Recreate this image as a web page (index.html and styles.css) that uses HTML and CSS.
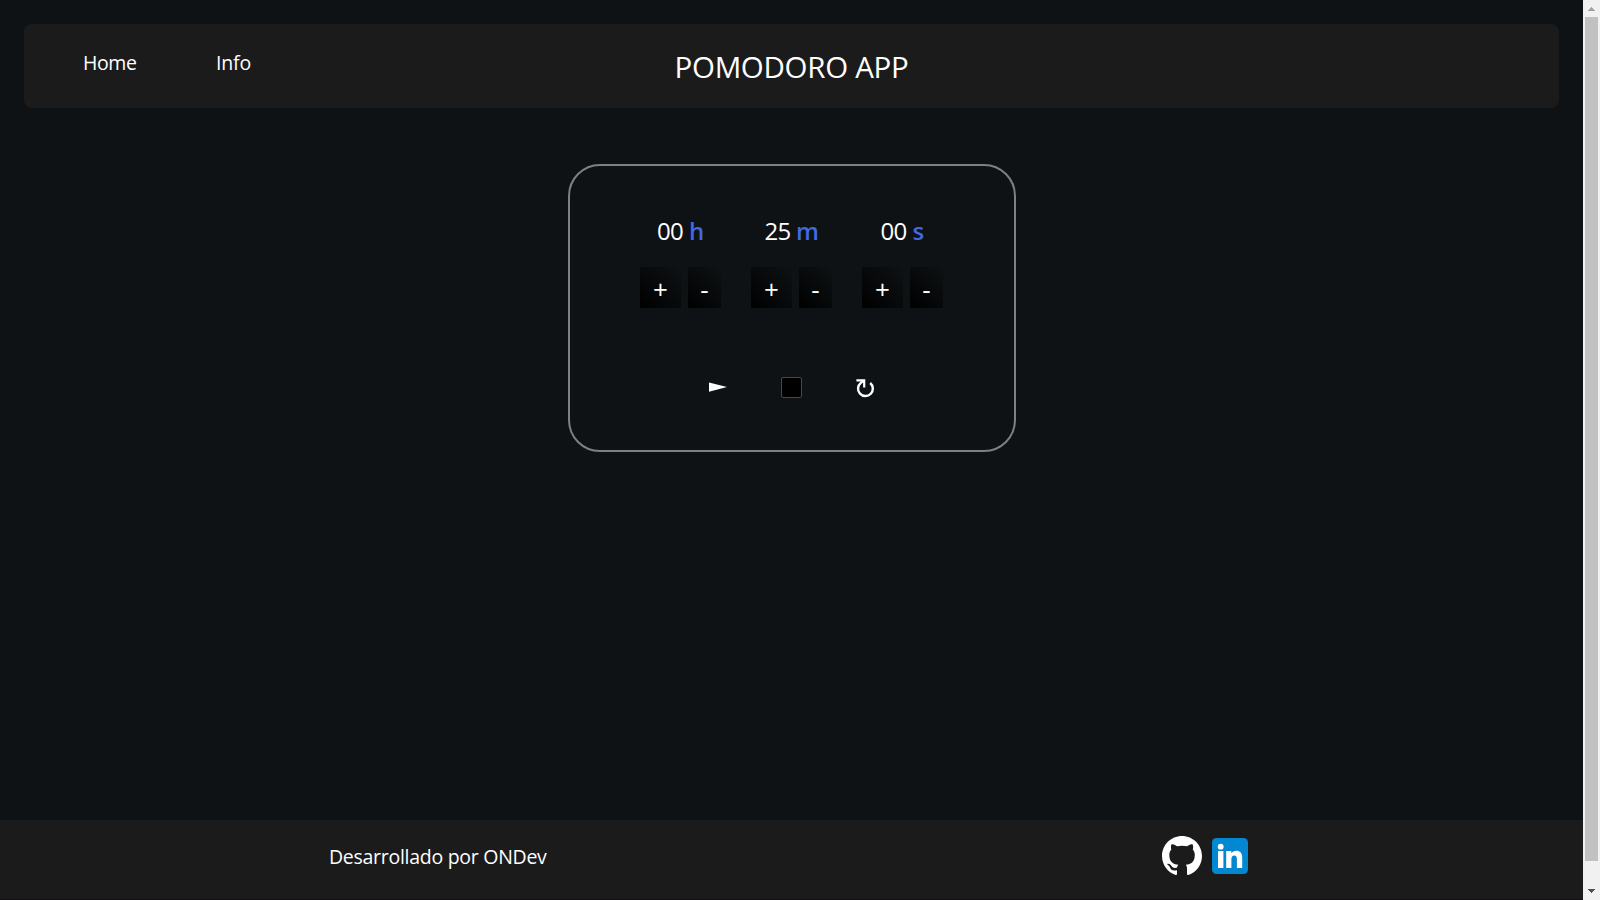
FILE: index.html
```html
<!DOCTYPE html>
<html lang="es">
<head>
<meta charset="utf-8">
<title>Pomodoro App</title>
<link rel="stylesheet" href="styles.css">
</head>
<body>
<div class="page">
  <header class="header">
    <nav class="nav"><a class="home">Home</a><a class="info">Info</a></nav>
    <h1 class="title">POMODORO APP</h1>
  </header>
  <main class="main">
    <section class="card">
      <div class="units">
        <div class="unit">
          <p class="time hours">00 <b>h</b></p>
          <div class="buttons"><button class="plus">+</button><button class="minus">-</button></div>
        </div>
        <div class="unit">
          <p class="time minutes">25 <b>m</b></p>
          <div class="buttons"><button class="plus">+</button><button class="minus">-</button></div>
        </div>
        <div class="unit">
          <p class="time seconds">00 <b>s</b></p>
          <div class="buttons"><button class="plus">+</button><button class="minus">-</button></div>
        </div>
      </div>
      <div class="controls">
        <svg class="play" width="18" height="10" viewBox="0 0 18 10"><path d="M0 .4 18 5 0 9.8z" fill="#fff"/></svg>
        <span class="stop"></span>
        <svg class="reload" width="20" height="22" viewBox="0 0 20 22" fill="none" stroke="#fff" stroke-width="2.4"><path d="M9 4.6 5.8 6.9A7.4 7.4 0 1 0 15.2 7"/><path d="M1.4 4.4H9.2V11.4" stroke-width="2.2"/></svg>
      </div>
    </section>
  </main>
  <footer class="footer">
    <p class="credit">Desarrollado por ONDev</p>
    <div class="social">
      <svg class="github" width="40" height="39" viewBox="0 0 16 15.6" preserveAspectRatio="none"><path fill="#fff" d="M8 0C3.58 0 0 3.58 0 8c0 3.54 2.29 6.53 5.47 7.59.4.07.55-.17.55-.38 0-.19-.01-.82-.01-1.49-2.01.37-2.53-.49-2.69-.94-.09-.23-.48-.94-.82-1.13-.28-.15-.68-.52-.01-.53.63-.01 1.08.58 1.23.82.72 1.21 1.87.87 2.33.66.07-.52.28-.87.51-1.07-1.78-.2-3.64-.89-3.64-3.95 0-.87.31-1.59.82-2.15-.08-.2-.36-1.02.08-2.12 0 0 .67-.21 2.2.82.64-.18 1.32-.27 2-.27s1.36.09 2 .27c1.53-1.04 2.2-.82 2.2-.82.44 1.1.16 1.92.08 2.12.51.56.82 1.27.82 2.15 0 3.07-1.87 3.75-3.65 3.95.29.25.54.73.54 1.48 0 1.07-.01 1.93-.01 2.2 0 .21.15.46.55.38A8.01 8.01 0 0 0 16 8c0-4.42-3.58-8-8-8z"/></svg>
      <svg width="36" height="36" viewBox="0 0 36 36"><rect width="36" height="36" rx="4.5" fill="#0288d1"/><g fill="#fff"><circle cx="8.7" cy="8.7" r="2.9"/><path d="M6 13h5.4V30H6zM14.2 13h5.1v2.3c1.1-1.7 2.8-2.6 5-2.6 3.9 0 5.9 2.5 5.9 7V30h-5.3v-9c0-2.3-.9-3.5-2.6-3.5-1.9 0-2.9 1.4-2.9 3.8V30h-5.2z"/></g></svg>
    </div>
  </footer>
</div>
<div class="scrollbar">
  <svg width="17" height="17" viewBox="0 0 17 17" shape-rendering="crispEdges"><path d="M8 7h1v1h1v1h1v1h1v1H5v-1h1V9h1V8h1z" fill="#a3a3a3"/></svg>
  <div class="thumb"></div>
  <svg class="down" width="17" height="17" viewBox="0 0 17 17" shape-rendering="crispEdges"><path d="M5 6h7v1h-1v1h-1v1H9v1H8V9H7V8H6V7H5z" fill="#505050"/></svg>
</div>
</body>
</html>
```
FILE: styles.css
```css
* { box-sizing: border-box; margin: 0; padding: 0; }
body {
  display: flex;
  height: 900px;
  overflow: hidden;
  background: #0e1214;
  color: #fff;
  font-family: "Segoe UI", "Open Sans", sans-serif;
}
.page { width: 1583px; height: 900px; display: flex; flex-direction: column; }
.header {
  display: grid;
  grid-template-columns: 1fr auto 1fr;
  height: 84px;
  margin: 24px 24px 0;
  border-radius: 8px;
  background: #1b1b1b;
}
.nav { display: flex; padding: 25px 0 0 59px; font-size: 19.5px; line-height: 28px; }
.home { width: 133px; letter-spacing: -.4px; }
.info { letter-spacing: -.15px; }
.title { padding-top: 22px; font-size: 29.5px; font-weight: 400; line-height: 42px; letter-spacing: -.3px; }
.main { flex: 1; padding: 56px 24px 0 25px; display: flex; justify-content: center; align-items: flex-start; }
.card {
  width: 448px;
  height: 288px;
  padding-top: 47px;
  border: 2px solid #808080;
  border-radius: 32px;
}
.units { display: flex; gap: 30px; padding-left: 70px; }
.unit { width: 81px; }
.time { font-size: 24px; line-height: 36px; white-space: pre; letter-spacing: -.7px; height: 54px; }
.time b { color: #4169e1; font-weight: 600; }
.hours { padding-left: 17px; word-spacing: .4px; }
.minutes { padding-left: 13.5px; }
.seconds { padding-left: 18.5px; word-spacing: .4px; }
.buttons { display: flex; gap: 7px; }
.buttons button {
  height: 41px;
  padding-top: 3px;
  border: 0;
  color: #fff;
  font: 26px/36px "Segoe UI", "Open Sans", sans-serif;
  background: linear-gradient(45deg, #000, #0e1214);
}
.plus { width: 41px; }
.minus { width: 33px; }
.controls { display: flex; align-items: center; height: 22px; margin-top: 68px; padding-left: 139px; }
.stop { width: 21px; height: 21px; margin: 0 53px 0 54px; border: 1px solid #484848; border-radius: 2px; background: #000; }
.footer { display: flex; height: 80px; border-bottom: 1px solid #120d12; background: #1b1b1b; }
.credit { width: 1162px; padding: 23px 0 0 329px; font-size: 19.5px; line-height: 28px; letter-spacing: -.28px; }
.social { display: flex; align-items: center; gap: 10px; height: 40px; margin-top: 16px; }
.github { margin-bottom: 1px; }
.scrollbar { width: 17px; height: 900px; display: flex; flex-direction: column; background: #f1f1f1; }
.thumb { width: 13px; height: 844px; margin-left: 2px; background: #c1c1c1; }
.down { margin-top: auto; }
```
